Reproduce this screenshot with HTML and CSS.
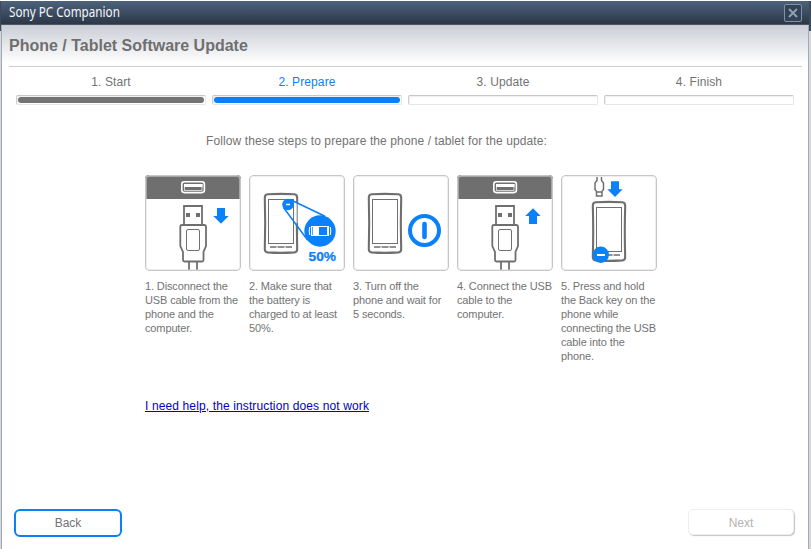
FILE: index.html
```html
<!DOCTYPE html>
<html lang="en">
<head>
<meta charset="utf-8">
<title>Sony PC Companion</title>
<link rel="stylesheet" href="styles.css">
</head>
<body>
<svg class="defs" width="0" height="0" aria-hidden="true">
  <defs>
    <g id="usb" fill="none" stroke="#6f6f6f" stroke-width="1.8">
      <path d="M0 0H96V24H0Z" fill="#6f6f6f" stroke="none"/>
      <rect x="36.8" y="6.8" width="22.6" height="10.8" rx="2.5" stroke="#fff" stroke-width="1.6"/>
      <path d="M39 9H57.500V12H39Z" fill="#fff" stroke="none"/>
      <path d="M39.500 9V15.500H57V9" stroke="#fff" stroke-width=".7"/>
      <path d="M39 49.500V31H57V49.500"/>
      <path d="M41 38H45V42H41ZM51 38H55V42H51Z" fill="#6f6f6f" stroke="none"/>
      <path d="M37 50H59Q61 50 61 52V71L58.500 77V85Q58.500 86.500 57 86.500H39.500Q38 86.500 38 85V77L35.300 71V52Q35.300 50 37 50Z"/>
      <rect x="41.500" y="54.500" width="13" height="21" rx="1.500" stroke-width="1"/>
      <path d="M44 87V95M52 87V95"/>
    </g>
    <g id="phone" fill="none" stroke="#6f6f6f">
      <path d="M18.500 19.300Q32 18.500 45.500 19.300Q48.200 19.500 48.200 23Q47.400 48 48.200 74Q48.200 77 45.500 77.400Q32 78.400 18.500 77.400Q15.800 77 15.800 74Q16.600 48 15.800 23Q15.800 19.500 18.500 19.300Z" stroke-width="2.1"/>
      <rect x="19.500" y="24.500" width="25" height="44" stroke-width="1"/>
      <path d="M21 72H27.500M28.500 72H35.500M36.500 72H43" stroke-width="1.500"/>
    </g>
    <path id="arrow" d="M4 0H12V8H15.700L8 15.700L.3 8H4Z" fill="#0a80fa"/>
  </defs>
</svg>
<div class="window">
  <header class="titlebar">
    <span class="app-name">Sony PC Companion</span>
    <button class="close" aria-label="Close"><svg width="10" height="10" viewBox="0 0 10 10"><path d="M1 1L9 9M9 1L1 9" stroke="#8fa0b6" stroke-width="2"/></svg></button>
  </header>
  <div class="heading"><h1>Phone / Tablet Software Update</h1></div>
  <ol class="progress">
    <li class="done"><span>1. Start</span><i></i></li>
    <li class="current"><span>2. Prepare</span><i></i></li>
    <li><span>3. Update</span><i></i></li>
    <li><span>4. Finish</span><i></i></li>
  </ol>
  <main>
    <p class="intro">Follow these steps to prepare the phone / tablet for the update:</p>
    <div class="steps">
      <section>
        <div class="art"><svg viewBox="0 0 96 96"><use href="#usb"/><use href="#arrow" x="68" y="33"/></svg></div>
        <p>1. Disconnect the<br>USB cable from the<br>phone and the<br>computer.</p>
      </section>
      <section>
        <div class="art"><svg viewBox="0 0 96 96"><use href="#phone"/>
          <path d="M42 25.500L76 41L58 64L35 33Z" fill="#fff"/>
          <path d="M44.500 26V68.500M48.200 28V48" stroke="#6f6f6f" fill="none"/>
          <path d="M48.200 48V60" stroke="#6f6f6f" stroke-width="1.800"/>
          <path d="M41 24.500L76 41.300M34.500 32.500L58.500 65" stroke="#0a80fa" stroke-width="1.500"/>
          <circle cx="39" cy="29.500" r="5.800" fill="#0a80fa"/><path d="M37 29.500H41" stroke="#fff" stroke-width="1.500"/>
          <circle cx="71" cy="56" r="15.700" fill="#0a80fa"/>
          <path d="M62 51H80V61H62Z" fill="#fff"/><path d="M70 52H78V60H70Z" fill="#0a80fa"/>
          <path d="M63.500 52V60" stroke="#0a80fa" stroke-width=".7"/>
          <path d="M60.800 52Q59.500 56 60.800 60M81.200 52Q82.500 56 81.200 60" fill="none" stroke="#fff"/>
          <text x="59.500" y="85.500" textLength="27.500" lengthAdjust="spacingAndGlyphs">50%</text></svg></div>
        <p>2. Make sure that<br>the battery is<br>charged to at least<br>50%.</p>
      </section>
      <section>
        <div class="art"><svg viewBox="0 0 96 96"><use href="#phone"/><circle cx="71.500" cy="55.500" r="14.500" fill="none" stroke="#0a80fa" stroke-width="4"/><path d="M71.500 49V62" stroke="#0a80fa" stroke-width="4.600" stroke-linecap="round"/></svg></div>
        <p>3. Turn off the<br>phone and wait for<br>5 seconds.</p>
      </section>
      <section>
        <div class="art"><svg viewBox="0 0 96 96"><use href="#usb"/><use href="#arrow" transform="translate(68 49) scale(1 -1)"/></svg></div>
        <p>4. Connect the USB<br>cable to the<br>computer.</p>
      </section>
      <section>
        <div class="art"><svg viewBox="0 0 96 96"><use href="#phone" x="16" y="8"/><use href="#arrow" x="46" y="6.300"/>
          <g fill="none" stroke="#6f6f6f" stroke-width="1.500"><path d="M36 2V5.500L34 8V14.500L36 17H40.500L42.500 14.500V8L40.500 5.500V2M35.500 17V21H41V17"/></g>
          <circle cx="39.800" cy="79.800" r="8.200" fill="#0a80fa"/><path d="M36 80H44" stroke="#fff" stroke-width="2"/></svg></div>
        <p>5. Press and hold<br>the Back key on the<br>phone while<br>connecting the USB<br>cable into the<br>phone.</p>
      </section>
    </div>
    <a class="help" href="#">I need help, the instruction does not work</a>
  </main>
  <footer><button class="back">Back</button><button class="next" disabled>Next</button></footer>
</div>
</body>
</html>
```
FILE: styles.css
```css
* { box-sizing: border-box; }
body {
  margin: 0;
  height: 549px;
  padding: 1px 2px 0 1px;
  overflow: hidden;
  background: linear-gradient(#fff 1px, #3c4a5d 1px 31px, #d4d7dc 31px);
  font: 12px "Liberation Sans", Arial, sans-serif;
  color: #737373;
}
.defs { display: none; }
.window {
  height: 548px;
  display: flex;
  flex-direction: column;
  background: #fff;
  border: solid #a3a9b2;
  border-width: 0 1px;
}
.titlebar {
  height: 24px;
  margin: 0 -1px;
  padding: 0 7px 0 8px;
  display: flex;
  justify-content: space-between;
  align-items: center;
  background: linear-gradient(#4d627c, #2c3748);
  border-bottom: 1px solid #4c5665;
}
.app-name {
  font: 14px/22px "Noto Sans", sans-serif;
  color: #f5f7fa;
  display: inline-block;
  transform: translateY(-1px) scaleX(.835);
  transform-origin: left;
}
.close {
  width: 18px;
  height: 18px;
  padding: 0;
  display: grid;
  place-items: center;
  background: #344256;
  border: 1px solid #8291a6;
  border-radius: 2px;
}
.heading {
  height: 42px;
  background: linear-gradient(#c9cdd5, #fff 38px);
  display: flex;
  padding: 0 6px 0 7px;
}
h1 {
  flex: 1;
  margin: 0;
  padding-top: 11px;
  font-size: 16px;
  line-height: 19px;
  color: #6f6f6f;
  border-bottom: 1px solid #cfcfcf;
}
.progress {
  list-style: none;
  margin: 0;
  padding: 8px 13px 0 14px;
  display: grid;
  grid-template-columns: repeat(4, 190px);
  gap: 6px;
}
.progress li { text-align: center; }
.progress span { display: block; line-height: 15px; height: 20px; letter-spacing: .1px; }
.progress i {
  display: block;
  height: 10px;
  border: 1px solid #e6e6e6;
  border-top-color: #c6c6c6;
  border-left-color: #cecece;
  border-radius: 2px;
  padding: 1px;
  box-shadow: inset 1px 1px 1px #eee;
}
.progress .done i::before, .progress .current i::before {
  content: "";
  display: block;
  height: 6px;
  border-radius: 3px;
  background: #737373;
}
.progress .current { color: #0a80fa; }
.progress .current i::before { background: #0a80fa; }
main { flex: 1; padding: 29px 0 0 143px; }
.intro { margin: 0 0 27px 61px; line-height: 14px; letter-spacing: .105px; }
.steps { display: grid; grid-template-columns: repeat(5, 96px); gap: 8px; height: 219px; }
.art {
  position: relative;
  height: 96px;
  border-radius: 4px;
  overflow: hidden;
}
.art::after {
  content: "";
  position: absolute;
  inset: 0;
  border: 1px solid #c6c6c6;
  border-radius: 4px;
  box-shadow: inset 0 0 0 1px #dedede80;
}
.art svg { display: block; width: 96px; height: 96px; }
.art text { font: bold 13px "Liberation Sans", Arial, sans-serif; fill: #0a80fa; stroke: #0a80fa; stroke-width: .25px; }
.steps p { margin: 8px 0 0; font-size: 11px; line-height: 14px; letter-spacing: -.13px; white-space: nowrap; }
.help { display: inline-block; margin-top: 5px; color: #00c; line-height: 14px; letter-spacing: .125px; }
footer { display: flex; justify-content: space-between; padding: 0 14px 12px 12px; }
footer button { font: 12px "Liberation Sans", Arial, sans-serif; color: #737373; background: #fff; letter-spacing: 0; }
.back { width: 108px; height: 28px; border: 2px solid #0a80fa; border-radius: 6px; }
.next { width: 106px; height: 26px; padding-top: 3px; border: 1px solid #eee; border-radius: 5px; box-shadow: 1px 1px 1px #c4c4c4; }
footer .next { color: #b3b3b3; }
```
